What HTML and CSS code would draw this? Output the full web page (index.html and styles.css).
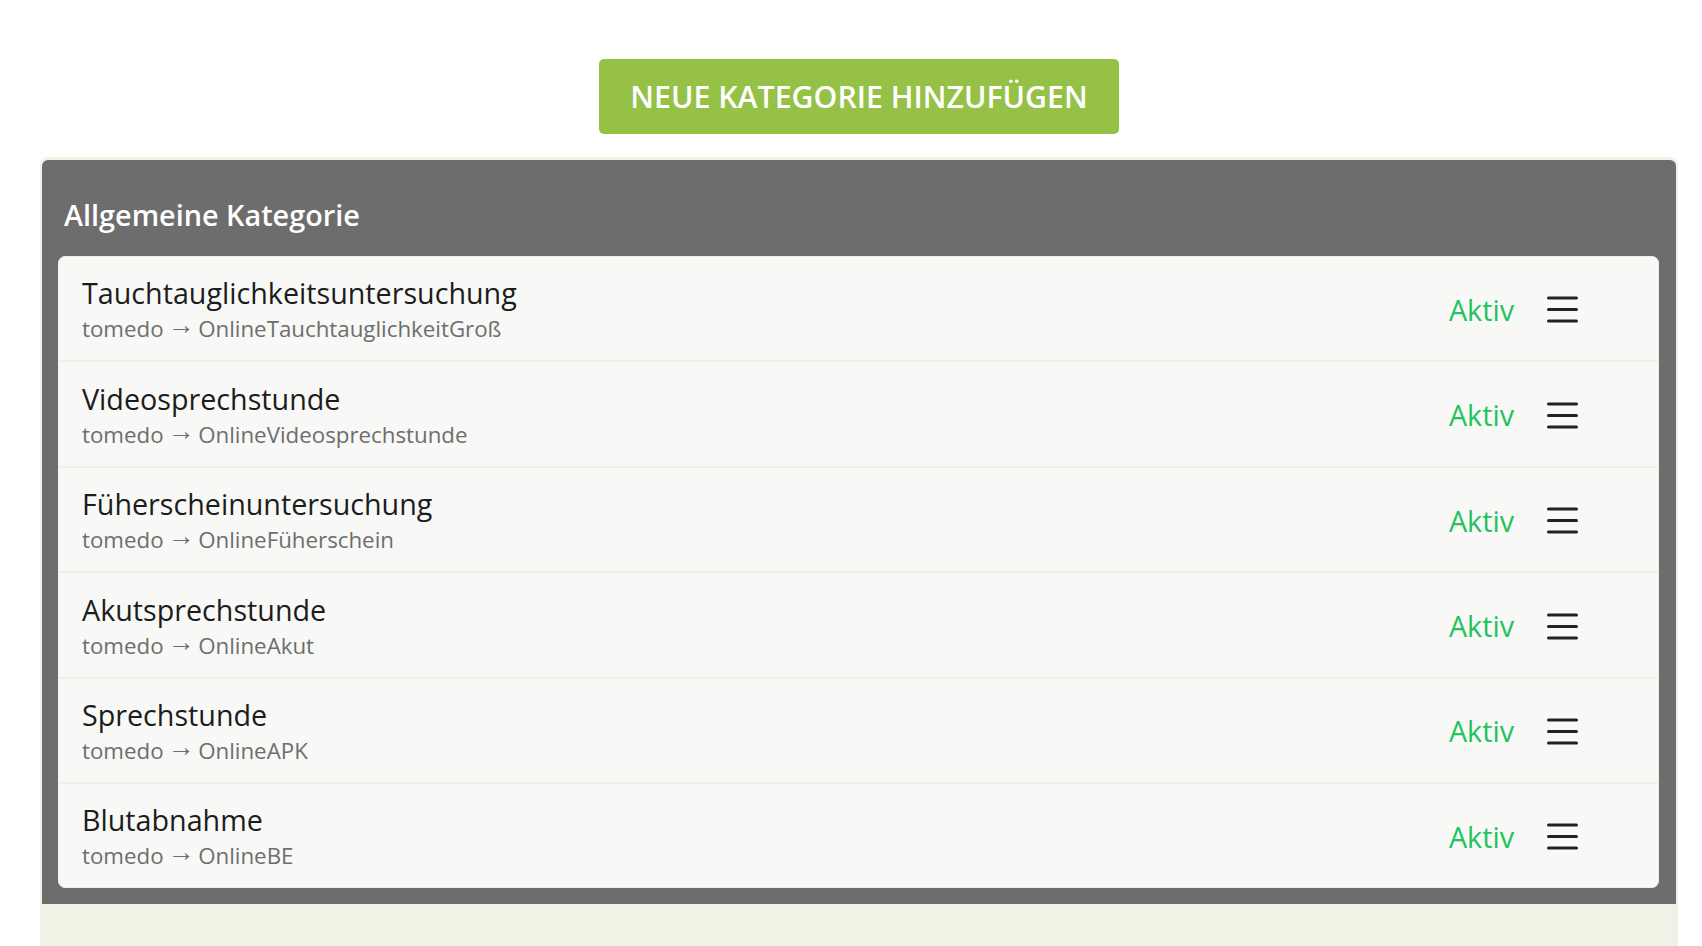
FILE: index.html
```html
<!DOCTYPE html>
<html lang="de">
<head>
    <meta charset="UTF-8">
    <meta name="viewport" content="width=device-width, initial-scale=1.0">
    <title>Kategorien</title>
    <link rel="stylesheet" href="styles.css">
</head>
<body>

<div class="top-bar">
    <button class="btn-add">Neue Kategorie hinzufügen</button>
</div>

<div class="content">
    <div class="panel">
        <h2>Allgemeine Kategorie</h2>
        <div class="list">
            <div class="row">
                <div class="info">
                    <div class="title">Tauchtauglichkeitsuntersuchung</div>
                    <div class="sub">tomedo <span class="arrow">→</span> OnlineTauchtauglichkeitGroß</div>
                </div>
                <span class="status">Aktiv</span>
                <svg class="menu" width="31" height="28" viewBox="0 0 31 28"><path d="M1.5 3H29.5M1.5 14.5H29.5M1.5 26H29.5" stroke="#222" stroke-width="3" stroke-linecap="round"/></svg>
            </div>
            <div class="row">
                <div class="info">
                    <div class="title">Videosprechstunde</div>
                    <div class="sub">tomedo <span class="arrow">→</span> OnlineVideosprechstunde</div>
                </div>
                <span class="status">Aktiv</span>
                <svg class="menu" width="31" height="28" viewBox="0 0 31 28"><path d="M1.5 3H29.5M1.5 14.5H29.5M1.5 26H29.5" stroke="#222" stroke-width="3" stroke-linecap="round"/></svg>
            </div>
            <div class="row">
                <div class="info">
                    <div class="title">Füherscheinuntersuchung</div>
                    <div class="sub">tomedo <span class="arrow">→</span> OnlineFüherschein</div>
                </div>
                <span class="status">Aktiv</span>
                <svg class="menu" width="31" height="28" viewBox="0 0 31 28"><path d="M1.5 3H29.5M1.5 14.5H29.5M1.5 26H29.5" stroke="#222" stroke-width="3" stroke-linecap="round"/></svg>
            </div>
            <div class="row">
                <div class="info">
                    <div class="title">Akutsprechstunde</div>
                    <div class="sub">tomedo <span class="arrow">→</span> OnlineAkut</div>
                </div>
                <span class="status">Aktiv</span>
                <svg class="menu" width="31" height="28" viewBox="0 0 31 28"><path d="M1.5 3H29.5M1.5 14.5H29.5M1.5 26H29.5" stroke="#222" stroke-width="3" stroke-linecap="round"/></svg>
            </div>
            <div class="row">
                <div class="info">
                    <div class="title">Sprechstunde</div>
                    <div class="sub">tomedo <span class="arrow">→</span> OnlineAPK</div>
                </div>
                <span class="status">Aktiv</span>
                <svg class="menu" width="31" height="28" viewBox="0 0 31 28"><path d="M1.5 3H29.5M1.5 14.5H29.5M1.5 26H29.5" stroke="#222" stroke-width="3" stroke-linecap="round"/></svg>
            </div>
            <div class="row">
                <div class="info">
                    <div class="title">Blutabnahme</div>
                    <div class="sub">tomedo <span class="arrow">→</span> OnlineBE</div>
                </div>
                <span class="status">Aktiv</span>
                <svg class="menu" width="31" height="28" viewBox="0 0 31 28"><path d="M1.5 3H29.5M1.5 14.5H29.5M1.5 26H29.5" stroke="#222" stroke-width="3" stroke-linecap="round"/></svg>
            </div>
        </div>
    </div>
</div>

</body>
</html>
```

FILE: styles.css
```css
body { margin: 0; background: #fff; font-family: "Open Sans", "Liberation Sans", sans-serif; color: #222; overflow: hidden; }
.top-bar { display: flex; justify-content: center; padding: 59px 24px 0 40px; }
.btn-add { height: 75px; padding: 0 31.5px; background: #95c146; color: #fff; border: none; border-radius: 5px; font-family: inherit; font-size: 30.3px; font-weight: 600; text-transform: uppercase; cursor: pointer; }
.content { margin: 23px 24px 0 40px; padding: 3px 2px 0; height: 900px; background: #eff2e4; border-radius: 8px 8px 0 0; }
.panel { background: #6d6d6d; border-radius: 6px 6px 0 0; padding: 37px 17px 16px 16px; }
.panel h2 { margin: 0 0 23px 6px; color: #fff; font-size: 28.8px; font-weight: 600; line-height: 36px; }
.list { background: #f8f8f6; border: 1px solid #eef0e2; border-radius: 7px; }
.row { display: flex; align-items: center; gap: 33px; padding: 18.4px 80px 17px 23px; border-bottom: 2px solid #eef1e3; }
.row:last-child { border-bottom: none; }
.info { flex: 1; }
.title { font-size: 28.7px; line-height: 36px; color: #1c1c1c; }
.sub { margin-top: 4px; font-size: 22.3px; line-height: 28px; color: #6e6e6e; }
.arrow { font-family: "Liberation Sans", sans-serif; font-size: 27px; line-height: 0; margin: 0 -2px; vertical-align: 3px; }
.status { font-size: 28.7px; color: #22c35c; }
.menu { display: block; }
```
